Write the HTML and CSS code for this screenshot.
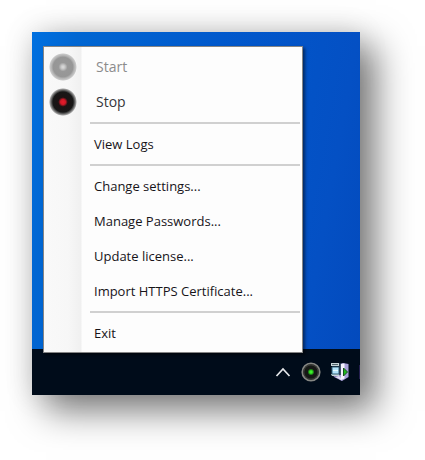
FILE: index.html
```html
<!DOCTYPE html>
<html lang="en">
<head>
<meta charset="utf-8">
<meta name="viewport" content="width=device-width, initial-scale=1">
<title>Tray menu</title>
<link rel="stylesheet" href="styles.css">
</head>
<body>
<main class="desktop">
  <div class="wallpaper">
    <div class="menu" role="menu">
      <button class="item item-service" role="menuitem" disabled>
        <span class="item-icon">
          <svg width="28" height="28" viewBox="0 0 28 28" aria-hidden="true">
            <defs>
              <radialGradient id="idle">
                <stop offset="0" stop-color="#dedede"/>
                <stop offset=".14" stop-color="#c8c8c8"/>
                <stop offset=".32" stop-color="#989898"/>
                <stop offset=".7" stop-color="#969696"/>
                <stop offset=".82" stop-color="#b4b4b4"/>
                <stop offset=".93" stop-color="#c8c8c8"/>
                <stop offset="1" stop-color="#f8f8f8"/>
              </radialGradient>
            </defs>
            <circle cx="14" cy="14" r="14" fill="url(#idle)"/>
          </svg>
        </span>
        <span class="item-label">Start</span>
      </button>
      <button class="item item-service" role="menuitem">
        <span class="item-icon">
          <svg width="28" height="28" viewBox="0 0 28 28" aria-hidden="true">
            <defs>
              <radialGradient id="record">
                <stop offset="0" stop-color="#e81c2c"/>
                <stop offset=".18" stop-color="#d01826"/>
                <stop offset=".34" stop-color="#1c1314"/>
                <stop offset=".72" stop-color="#171717"/>
                <stop offset=".82" stop-color="#555"/>
                <stop offset=".93" stop-color="#a0a0a0"/>
                <stop offset="1" stop-color="#f8f8f8"/>
              </radialGradient>
            </defs>
            <circle cx="14" cy="14" r="14" fill="url(#record)"/>
          </svg>
        </span>
        <span class="item-label">Stop</span>
      </button>
      <hr class="separator">
      <button class="item" role="menuitem"><span class="item-label">View Logs</span></button>
      <hr class="separator">
      <button class="item" role="menuitem"><span class="item-label">Change settings...</span></button>
      <button class="item" role="menuitem"><span class="item-label">Manage Passwords...</span></button>
      <button class="item" role="menuitem"><span class="item-label">Update license...</span></button>
      <button class="item" role="menuitem"><span class="item-label">Import HTTPS Certificate...</span></button>
      <hr class="separator">
      <button class="item" role="menuitem"><span class="item-label">Exit</span></button>
    </div>
  </div>
  <div class="taskbar">
    <button class="tray-button" aria-label="Show hidden icons">
      <svg width="16" height="20" viewBox="0 0 16 20" aria-hidden="true">
        <path d="M1.5 14 8 7l6.500 7" fill="none" stroke="#e4e7ea" stroke-width="1.700"/>
      </svg>
    </button>
    <button class="tray-button" aria-label="Recording service">
      <svg width="20" height="20" viewBox="0 0 20 20" aria-hidden="true">
        <defs>
          <radialGradient id="running">
            <stop offset="0" stop-color="#55ff3c"/>
            <stop offset=".45" stop-color="#2bd51d"/>
            <stop offset="1" stop-color="#151815"/>
          </radialGradient>
        </defs>
        <circle cx="10" cy="10" r="8.700" fill="#151815" stroke="#858783" stroke-width="1.800"/>
        <circle cx="10" cy="10" r="7.200" fill="none" stroke="#383a37" stroke-width="1.200"/>
        <circle cx="10" cy="10" r="3.500" fill="url(#running)"/>
      </svg>
    </button>
    <button class="tray-button" aria-label="Server manager">
      <svg width="18" height="20" viewBox="0 0 18 20" aria-hidden="true">
        <path d="M2 13h9v6L3 15z" fill="#877bb8"/>
        <path d="M9 2l3-1 5.500 1v13L11 19l-3-2z" fill="#a8a1d8"/>
        <path d="M10 2l3.500-.5v15L10 18z" fill="#f3f2fc"/>
        <path d="M4 15l4-1 2 2v2z" fill="#e2ddf3"/>
        <path d="M0 1h8v3H0zM0 12h8v2H1z" fill="#c7d5d9"/>
        <path d="M1 2.500h6" stroke="#53666e"/>
        <path d="M1 5h7v7H1z" fill="#b4e4fb" stroke="#315f79"/>
        <path d="M2 8.500h5" stroke="#e6faff"/>
        <path d="M9 1v12" stroke="#23394a" stroke-width="1.500"/>
        <path d="M12.500 6l4 4-4 4z" fill="#20b91c" stroke="#14551b"/>
      </svg>
    </button>
    <span class="tray-edge"></span>
  </div>
</main>
</body>
</html>
```
FILE: styles.css
```css
* {
  box-sizing: border-box;
}

body {
  margin: 0;
  padding: 32px 65px 65px 32px;
  background: #fff;
  font-family: "Open Sans", "Noto Sans", sans-serif;
  font-size: 13px;
}

button {
  border: 0;
  padding: 0;
  background: none;
  color: inherit;
  font: inherit;
  text-align: left;
}

.desktop {
  background: #000c1a;
  box-shadow: 15px 15px 34px 1px rgba(0, 0, 0, 0.5), 0 0 28px rgba(0, 0, 0, 0.12);
}

.wallpaper {
  display: flow-root;
  padding: 14px 57px 0 11px;
  background: linear-gradient(100deg, #0070e0 0%, #0066d2 12%, #0058cc 50%, #0450c4 85%, #034abd 100%);
}

/* The menu opens slightly over the taskbar. */
.menu {
  position: relative;
  margin-bottom: -4px;
  padding: 3px 2px 1px 0;
  border: 1px solid #858585;
  background: linear-gradient(90deg, #f9f9f9, #f7f7f7 24px, #f0f0f0 37px, #fdfdfd 38px);
  box-shadow: 2px 2px 3px rgba(0, 0, 0, 0.5);
  color: #171419;
}

.item {
  display: grid;
  grid-template-columns: 50px 1fr;
  align-items: center;
  width: 100%;
  height: 35px;
  padding-bottom: 1px;
}

.item-label {
  grid-column: 2;
  line-height: 20px;
}

.item-icon {
  display: flex;
  padding-left: 5px;
}

.item-service {
  grid-template-columns: 52px 1fr;
  color: #35353a;
  font-size: 14px;
}

.item-service:disabled {
  color: #8c8c8c;
}

.separator {
  height: 2px;
  margin: 2px 0 3px 46px;
  border: 0;
  background: #d0d0d0;
}

.taskbar {
  display: flex;
  align-items: center;
  justify-content: flex-end;
  gap: 10px;
  height: 46px;
}

.tray-button,
.tray-button svg {
  display: block;
}

.tray-edge {
  width: 1px;
  height: 14px;
  background: #241f4e;
}
```
